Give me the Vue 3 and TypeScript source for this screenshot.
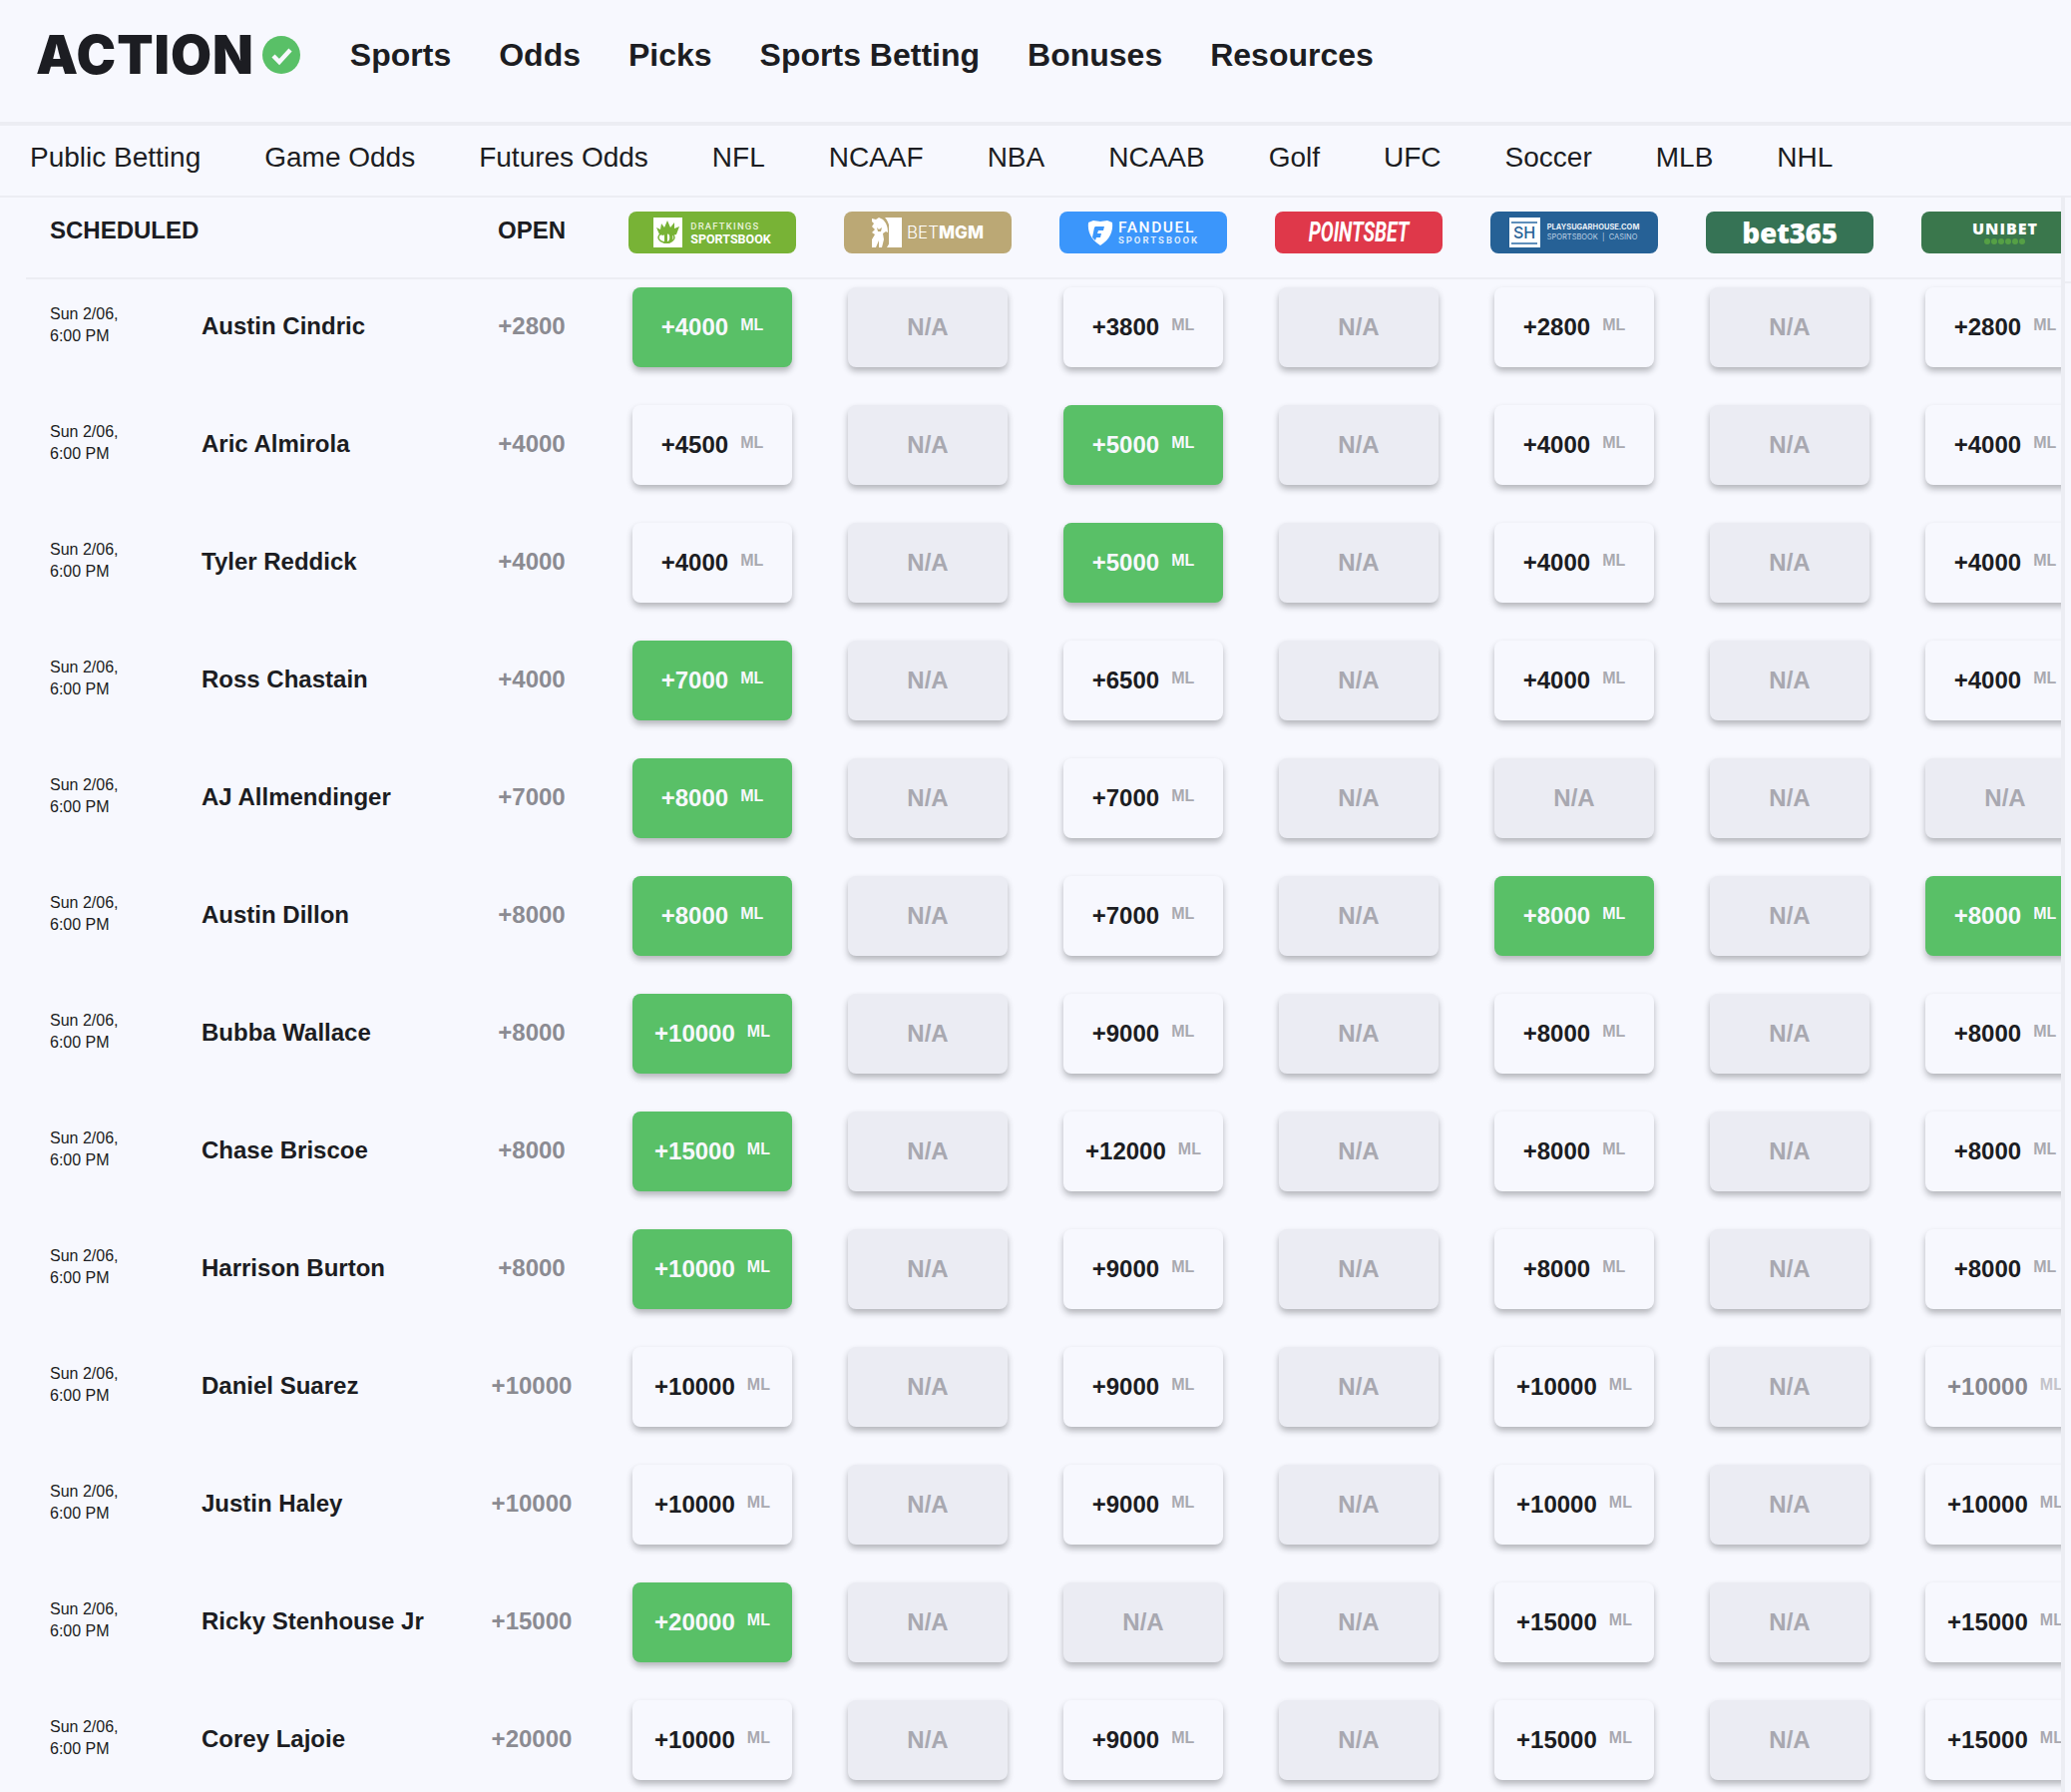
<script setup lang="ts">
interface Row { name: string; open: string; cells: string[] }
const nav: string[] = ['Sports', 'Odds', 'Picks', 'Sports Betting', 'Bonuses', 'Resources']
const sub: string[] = ['Public Betting', 'Game Odds', 'Futures Odds', 'NFL', 'NCAAF', 'NBA', 'NCAAB', 'Golf', 'UFC', 'Soccer', 'MLB', 'NHL']
const rows: Row[] = [
  { name: 'Austin Cindric', open: '+2800', cells: ['g+4000', '', '+3800', '', '+2800', '', '+2800'] },
  { name: 'Aric Almirola', open: '+4000', cells: ['+4500', '', 'g+5000', '', '+4000', '', '+4000'] },
  { name: 'Tyler Reddick', open: '+4000', cells: ['+4000', '', 'g+5000', '', '+4000', '', '+4000'] },
  { name: 'Ross Chastain', open: '+4000', cells: ['g+7000', '', '+6500', '', '+4000', '', '+4000'] },
  { name: 'AJ Allmendinger', open: '+7000', cells: ['g+8000', '', '+7000', '', '', '', ''] },
  { name: 'Austin Dillon', open: '+8000', cells: ['g+8000', '', '+7000', '', 'g+8000', '', 'g+8000'] },
  { name: 'Bubba Wallace', open: '+8000', cells: ['g+10000', '', '+9000', '', '+8000', '', '+8000'] },
  { name: 'Chase Briscoe', open: '+8000', cells: ['g+15000', '', '+12000', '', '+8000', '', '+8000'] },
  { name: 'Harrison Burton', open: '+8000', cells: ['g+10000', '', '+9000', '', '+8000', '', '+8000'] },
  { name: 'Daniel Suarez', open: '+10000', cells: ['+10000', '', '+9000', '', '+10000', '', 'f+10000'] },
  { name: 'Justin Haley', open: '+10000', cells: ['+10000', '', '+9000', '', '+10000', '', '+10000'] },
  { name: 'Ricky Stenhouse Jr', open: '+15000', cells: ['g+20000', '', '', '', '+15000', '', '+15000'] },
  { name: 'Corey Lajoie', open: '+20000', cells: ['+10000', '', '+9000', '', '+15000', '', '+15000'] },
]
function kind(c: string): string {
  if (!c) return 'na'
  if (c[0] === 'g') return 'best'
  if (c[0] === 'f') return 'faded'
  return 'plain'
}
function odds(c: string): string {
  return c.replace(/^[gf]/, '')
}
</script>

<template>
  <div class="page">
    <header class="top">
      <div class="brand">
        <span class="brand-word">ACTION</span>
        <svg class="brand-check" viewBox="0 0 38 38" aria-hidden="true">
          <circle cx="19" cy="19" r="19" fill="#59c067" />
          <path d="M11 20l6 6 11-12" fill="none" stroke="#f7f8fe" stroke-width="4.4" />
        </svg>
      </div>
      <nav class="main-nav">
        <a v-for="n in nav" :key="n">{{ n }}</a>
      </nav>
    </header>
    <nav class="sub-nav">
      <a v-for="s in sub" :key="s">{{ s }}</a>
    </nav>
    <div class="board">
      <div class="scroller">
        <div class="head-row">
          <div class="head-title">SCHEDULED</div>
          <div class="open-cell head-open">OPEN</div>
          <div class="book-cell">
            <div class="logo dk">
              <svg class="lg-box" viewBox="0 0 29 30" aria-hidden="true">
                <rect width="29" height="30" fill="#fff" />
                <path d="M3 10l4 2 1-6 3 4 3-7 3 7 4-5 0 6 5-2-3 8-4 1c-2-2-7-2-9 0l-4-1z" fill="#78b336" />
                <ellipse cx="13" cy="20" rx="8" ry="5" fill="none" stroke="#78b336" stroke-width="1.500" />
                <path d="M11 14h4c6 0 6 12 0 12h-5l1-1.500zM14 16v8c3 0 3-8 0-8z" fill="#78b336" fill-rule="evenodd" />
              </svg>
              <div class="lg-stack">
                <span class="dk-1">DRAFTKINGS</span>
                <span class="dk-2">SPORTSBOOK</span>
              </div>
            </div>
          </div>
          <div class="book-cell">
            <div class="logo mgm">
              <svg class="lg-box" viewBox="0 0 30 30" aria-hidden="true">
                <rect x="17" width="13" height="30" fill="#fff" />
                <path d="M13 0c6 6 8 23 2 30h3c6-8 6-22-1-30z" fill="#fff" />
                <path d="M0 1l4 1 3-2 4 2c4 4 5 8 5 13l-2-1-3 2 1 6-2 8H7v-7l-3 7H0v-8l3-5-3-2 3-3-3-3 2-3-2-2zM5 10l2 2 3-2-1 4H6z" fill="#fff" fill-rule="evenodd" />
              </svg>
              <span class="mgm-word"><i>BET</i><b>MGM</b></span>
            </div>
          </div>
          <div class="book-cell">
            <div class="logo fd">
              <svg class="fd-mark" viewBox="0 0 26 26" aria-hidden="true">
                <path d="M1 3l5-2c2 0 5 1 7 1s5-1 7-1l5 2c1 8-2 17-12 23C3 20 0 11 1 3z" fill="#fff" />
                <path d="M8 7h9l-1 4h-5l-1 3h4l-1 4h-4l-1 3-3-3 2-10z" fill="#3b96fb" />
              </svg>
              <div class="lg-stack">
                <span class="fd-1">FANDUEL</span>
                <span class="fd-2">SPORTSBOOK</span>
              </div>
            </div>
          </div>
          <div class="book-cell">
            <div class="logo pb"><span class="pb-word">POINTSBET</span></div>
          </div>
          <div class="book-cell">
            <div class="logo sh">
              <div class="sh-box"><span>SH</span></div>
              <div class="lg-stack">
                <span class="sh-1">PLAYSUGARHOUSE.COM</span>
                <span class="sh-2">SPORTSBOOK&nbsp; |&nbsp; CASINO</span>
              </div>
            </div>
          </div>
          <div class="book-cell">
            <div class="logo b365"><span>bet365</span></div>
          </div>
          <div class="book-cell">
            <div class="logo uni">
              <div class="uni-stack">
                <span class="uni-word">UNIBET</span>
                <div class="uni-dots"><i v-for="d in 6" :key="d"></i></div>
              </div>
            </div>
          </div>
        </div>
        <div v-for="r in rows" :key="r.name" class="row">
          <div class="when">Sun 2/06,<br />6:00 PM</div>
          <div class="name">{{ r.name }}</div>
          <div class="open-cell open-val">{{ r.open }}</div>
          <div v-for="(c, i) in r.cells" :key="i" class="book-cell">
            <div class="bet" :class="kind(c)">
              <template v-if="c">
                <span class="price">{{ odds(c) }}</span>
                <span class="ml">ML</span>
              </template>
              <span v-else class="na-text">N/A</span>
            </div>
          </div>
        </div>
      </div>
      <div class="rail"></div>
    </div>
  </div>
</template>

<style>
html, body { overflow: hidden; background: #f7f8fe; }
</style>

<style scoped>
.page {
  width: 2076px;
  height: 1796px;
  overflow: hidden;
  background: #f7f8fe;
  color: #1c1d22;
  font-family: "Liberation Sans", Arial, sans-serif;
}
.top {
  display: flex;
  align-items: center;
  height: 110px;
  padding: 0 0 12px 36px;
  border-bottom: 4px solid #ecedf3;
}
.brand { display: flex; align-items: center; gap: 8px; }
.brand-word {
  font-family: Inter, sans-serif;
  font-weight: 900;
  font-size: 53px;
  line-height: 40px;
  letter-spacing: 1px;
  color: #1c1d22;
}
.brand-check { width: 38px; height: 38px; flex: none; }
.main-nav { display: flex; gap: 48px; margin-left: 50px; }
.main-nav a { font-size: 32px; font-weight: 700; line-height: 40px; }
.sub-nav {
  display: flex;
  gap: 64px;
  height: 72px;
  padding: 0 0 6px 30px;
  box-sizing: border-box;
  align-items: center;
  border-bottom: 2px solid #ecedf3;
}
.sub-nav a { font-size: 28px; line-height: 34px; }
.board { display: flex; align-items: flex-start; width: 2076px; }
.scroller {
  width: 2040px;
  flex: none;
  margin-left: 26px;
  border-right: 4px solid #ecedf3;
  overflow: hidden;
}
.rail { width: 6px; height: 84px; flex: none; border-bottom: 2px solid #ecedf3; }
.head-row {
  display: flex;
  align-items: flex-start;
  height: 80px;
  border-bottom: 2px solid #ecedf3;
}
.head-title {
  width: 434px;
  flex: none;
  padding: 19px 0 0 24px;
  box-sizing: border-box;
  font-size: 24px;
  font-weight: 700;
  line-height: 28px;
}
.open-cell { width: 146px; flex: none; text-align: center; }
.head-open { padding-top: 19px; font-size: 24px; font-weight: 700; line-height: 28px; }
.book-cell { width: 216px; flex: none; display: flex; justify-content: center; }
.head-row .book-cell { padding-top: 14px; }
.logo {
  width: 168px;
  height: 42px;
  border-radius: 8px;
  display: flex;
  align-items: center;
  justify-content: center;
  color: #fff;
  overflow: hidden;
  flex: none;
}
.lg-box { width: 29px; height: 30px; flex: none; }
.lg-stack { display: flex; flex-direction: column; font-family: Roboto, sans-serif; white-space: nowrap; }
.dk { background: #78b336; gap: 8px; }
.dk-1 { font-size: 9.500px; line-height: 12px; letter-spacing: 1.200px; font-weight: 500; color: #e8f2d8; }
.dk-2 { font-size: 12.500px; line-height: 13px; letter-spacing: 0; font-weight: 700; }
.mgm { background: #bba875; gap: 5px; }
.mgm .lg-box { width: 30px; }
.mgm-word { font-family: Inter, sans-serif; font-size: 17px; line-height: 20px; white-space: nowrap; }
.mgm-word i { font-style: normal; font-weight: 300; }
.mgm-word b { font-weight: 800; }
.fd { background: #3b96fb; gap: 5px; }
.fd-mark { width: 26px; height: 26px; flex: none; }
.fd-1 { font-size: 15.500px; line-height: 14px; letter-spacing: 1.600px; font-weight: 500; }
.fd-2 { font-size: 9.500px; line-height: 11px; letter-spacing: 2px; font-weight: 700; color: #dcebfe; }
.pb { background: #df384a; }
.pb-word {
  font-family: Roboto, sans-serif;
  font-style: italic;
  font-weight: 700;
  font-size: 28px;
  line-height: 30px;
  transform: scaleX(.69);
  white-space: nowrap;
}
.sh { background: #266196; gap: 7px; }
.sh-box {
  width: 31px;
  height: 30px;
  box-sizing: border-box;
  background: #fff;
  display: flex;
  align-items: center;
  justify-content: center;
  flex: none;
}
.sh-box span {
  font-family: Inter, sans-serif;
  font-size: 16px;
  line-height: 17px;
  font-weight: 500;
  color: #266196;
  border-top: 2px solid #5f8fbb;
  border-bottom: 2px solid #5f8fbb;
  padding: 1px 2px;
}
.sh-1 { font-family: Inter, sans-serif; font-size: 7.500px; line-height: 10px; font-weight: 700; color: #e7eff7; }
.sh-2 { font-family: Inter, sans-serif; font-size: 7.500px; line-height: 10px; font-weight: 400; color: #bcd0e3; }
.b365 {
  background: #367355;
  font-family: "Open Sans", sans-serif;
  font-weight: 800;
  font-size: 28px;
  letter-spacing: -.3px;
}
.uni { background: #3a774c; width: 168px; }
.uni-stack { display: flex; flex-direction: column; align-items: center; gap: 2px; }
.uni-word { font-family: "Open Sans", sans-serif; font-size: 16px; font-weight: 800; line-height: 16px; letter-spacing: 1px; }
.uni-dots { display: flex; gap: 1px; }
.uni-dots i { width: 6px; height: 6px; border-radius: 50%; background: #55a045; }
.row {
  display: flex;
  align-items: center;
  height: 118px;
  box-sizing: border-box;
  padding: 8px 0 30px;
}
.when {
  width: 176px;
  flex: none;
  padding: 0 0 4px 24px;
  box-sizing: border-box;
  font-size: 16px;
  line-height: 22px;
  color: #1c1d22;
}
.name {
  width: 258px;
  flex: none;
  padding-bottom: 3px;
  font-size: 24px;
  font-weight: 700;
  line-height: 28px;
  white-space: nowrap;
}
.open-val { padding-bottom: 3px; font-size: 24px; font-weight: 700; line-height: 28px; color: #8b8b92; }
.bet {
  width: 160px;
  height: 80px;
  box-sizing: border-box;
  border-radius: 8px;
  display: flex;
  align-items: center;
  justify-content: center;
  gap: 12px;
  box-shadow: 0 4px 6px rgba(28, 29, 34, .3);
  flex: none;
}
.price { font-size: 24px; font-weight: 700; line-height: 28px; }
.ml { font-size: 16px; font-weight: 700; line-height: 18px; padding-bottom: 5px; color: #a9a9b0; }
.plain { background: #f7f8fe; }
.best { background: #59c067; color: #f7f8fe; }
.best .ml { color: #f7f8fe; }
.faded { background: #f7f8fe; }
.faded .price { color: #85858c; }
.faded .ml { color: #c4c4ca; }
.na { background: #ebecf3; }
.na-text { font-size: 24px; font-weight: 700; line-height: 28px; color: #a8a8b0; }
</style>
